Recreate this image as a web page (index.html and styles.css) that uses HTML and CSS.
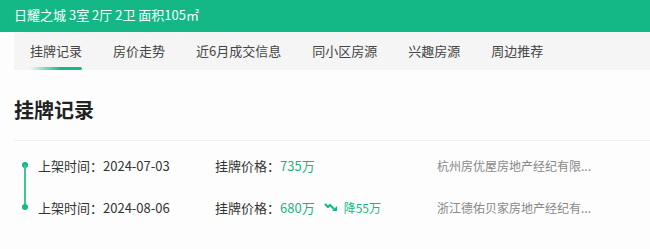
FILE: index.html
```html
<!DOCTYPE html>
<html lang="zh-CN">
<head>
<meta charset="UTF-8" />
<meta name="viewport" content="width=device-width, initial-scale=1" />
<title>挂牌记录</title>
<link rel="stylesheet" href="styles.css">
</head>
<body>

<div class="topbar">日耀之城 3室 2厅 2卫 面积105㎡</div>

<div class="page">
  <div class="tabs">
    <span class="tab active">挂牌记录</span>
    <span class="tab">房价走势</span>
    <span class="tab">近6月成交信息</span>
    <span class="tab">同小区房源</span>
    <span class="tab">兴趣房源</span>
    <span class="tab">周边推荐</span>
  </div>

  <h2 class="title">挂牌记录</h2>

  <ul class="records">
    <li class="record">
      <span class="date">上架时间：2024-07-03</span>
      <span class="price">挂牌价格：<em>735万</em></span>
      <span class="agent">杭州房优屋房地产经纪有限...</span>
    </li>
    <li class="record">
      <span class="date">上架时间：2024-08-06</span>
      <span class="price">挂牌价格：<em>680万</em>
        <span class="drop">
          <svg width="14" height="10" viewBox="0 0 14 10"><path d="M1 2 L4 5 L6 3 L10 7" fill="none" stroke="#13b886" stroke-width="2"/><path d="M8 9 L13 9 L13 4 Z" fill="#13b886"/></svg>
          降55万
        </span>
      </span>
      <span class="agent">浙江德佑贝家房地产经纪有...</span>
    </li>
  </ul>
</div>

</body>
</html>
```

FILE: styles.css
```css
body {
  margin: 0;
  background: #fdfdfd;
  font-family: "Noto Sans CJK SC", "Noto Sans", sans-serif;
  color: #333;
}
.topbar {
  height: 32px;
  line-height: 30px;
  background: #13b886;
  color: #fff;
  font-size: 13px;
  padding-left: 14px;
}
.page {
  padding-left: 14px;
}
.tabs {
  display: flex;
  background: #f5f5f5;
  height: 38px;
  padding-left: 16px;
  gap: 31px;
}
.tab {
  position: relative;
  font-size: 13px;
  line-height: 37px;
  color: #444;
}
.tab.active::after {
  content: "";
  position: absolute;
  left: 0;
  right: 0;
  bottom: 0;
  height: 3px;
  border-radius: 2px;
  background: linear-gradient(to right, rgba(19,184,134,0), #13b886 60%);
}
.title {
  margin: 0;
  padding: 26px 0 16px;
  font-size: 20px;
  line-height: 28px;
  color: #222;
  font-weight: bold;
  border-bottom: 1px solid #f0f0f0;
}
.records {
  list-style: none;
  margin: 0;
  padding: 3px 0 0;
}
.record {
  position: relative;
  display: flex;
  align-items: center;
  height: 42px;
  padding-left: 24px;
  font-size: 13px;
}
.record::before {
  content: "";
  position: absolute;
  left: 8px;
  top: 18px;
  width: 6px;
  height: 6px;
  border-radius: 50%;
  background: #13b886;
}
.record:first-child::after {
  content: "";
  position: absolute;
  left: 10px;
  top: 21px;
  width: 2px;
  height: 42px;
  background: #3cc596;
}
.date {
  width: 177px;
}
.price {
  width: 222px;
  display: flex;
  align-items: center;
}
.price em {
  font-style: normal;
  color: #1eb37e;
}
.drop {
  display: inline-flex;
  align-items: center;
  gap: 6px;
  margin-left: 9px;
  font-size: 12px;
  color: #13b886;
}
.agent {
  font-size: 12px;
  color: #888;
}
```
